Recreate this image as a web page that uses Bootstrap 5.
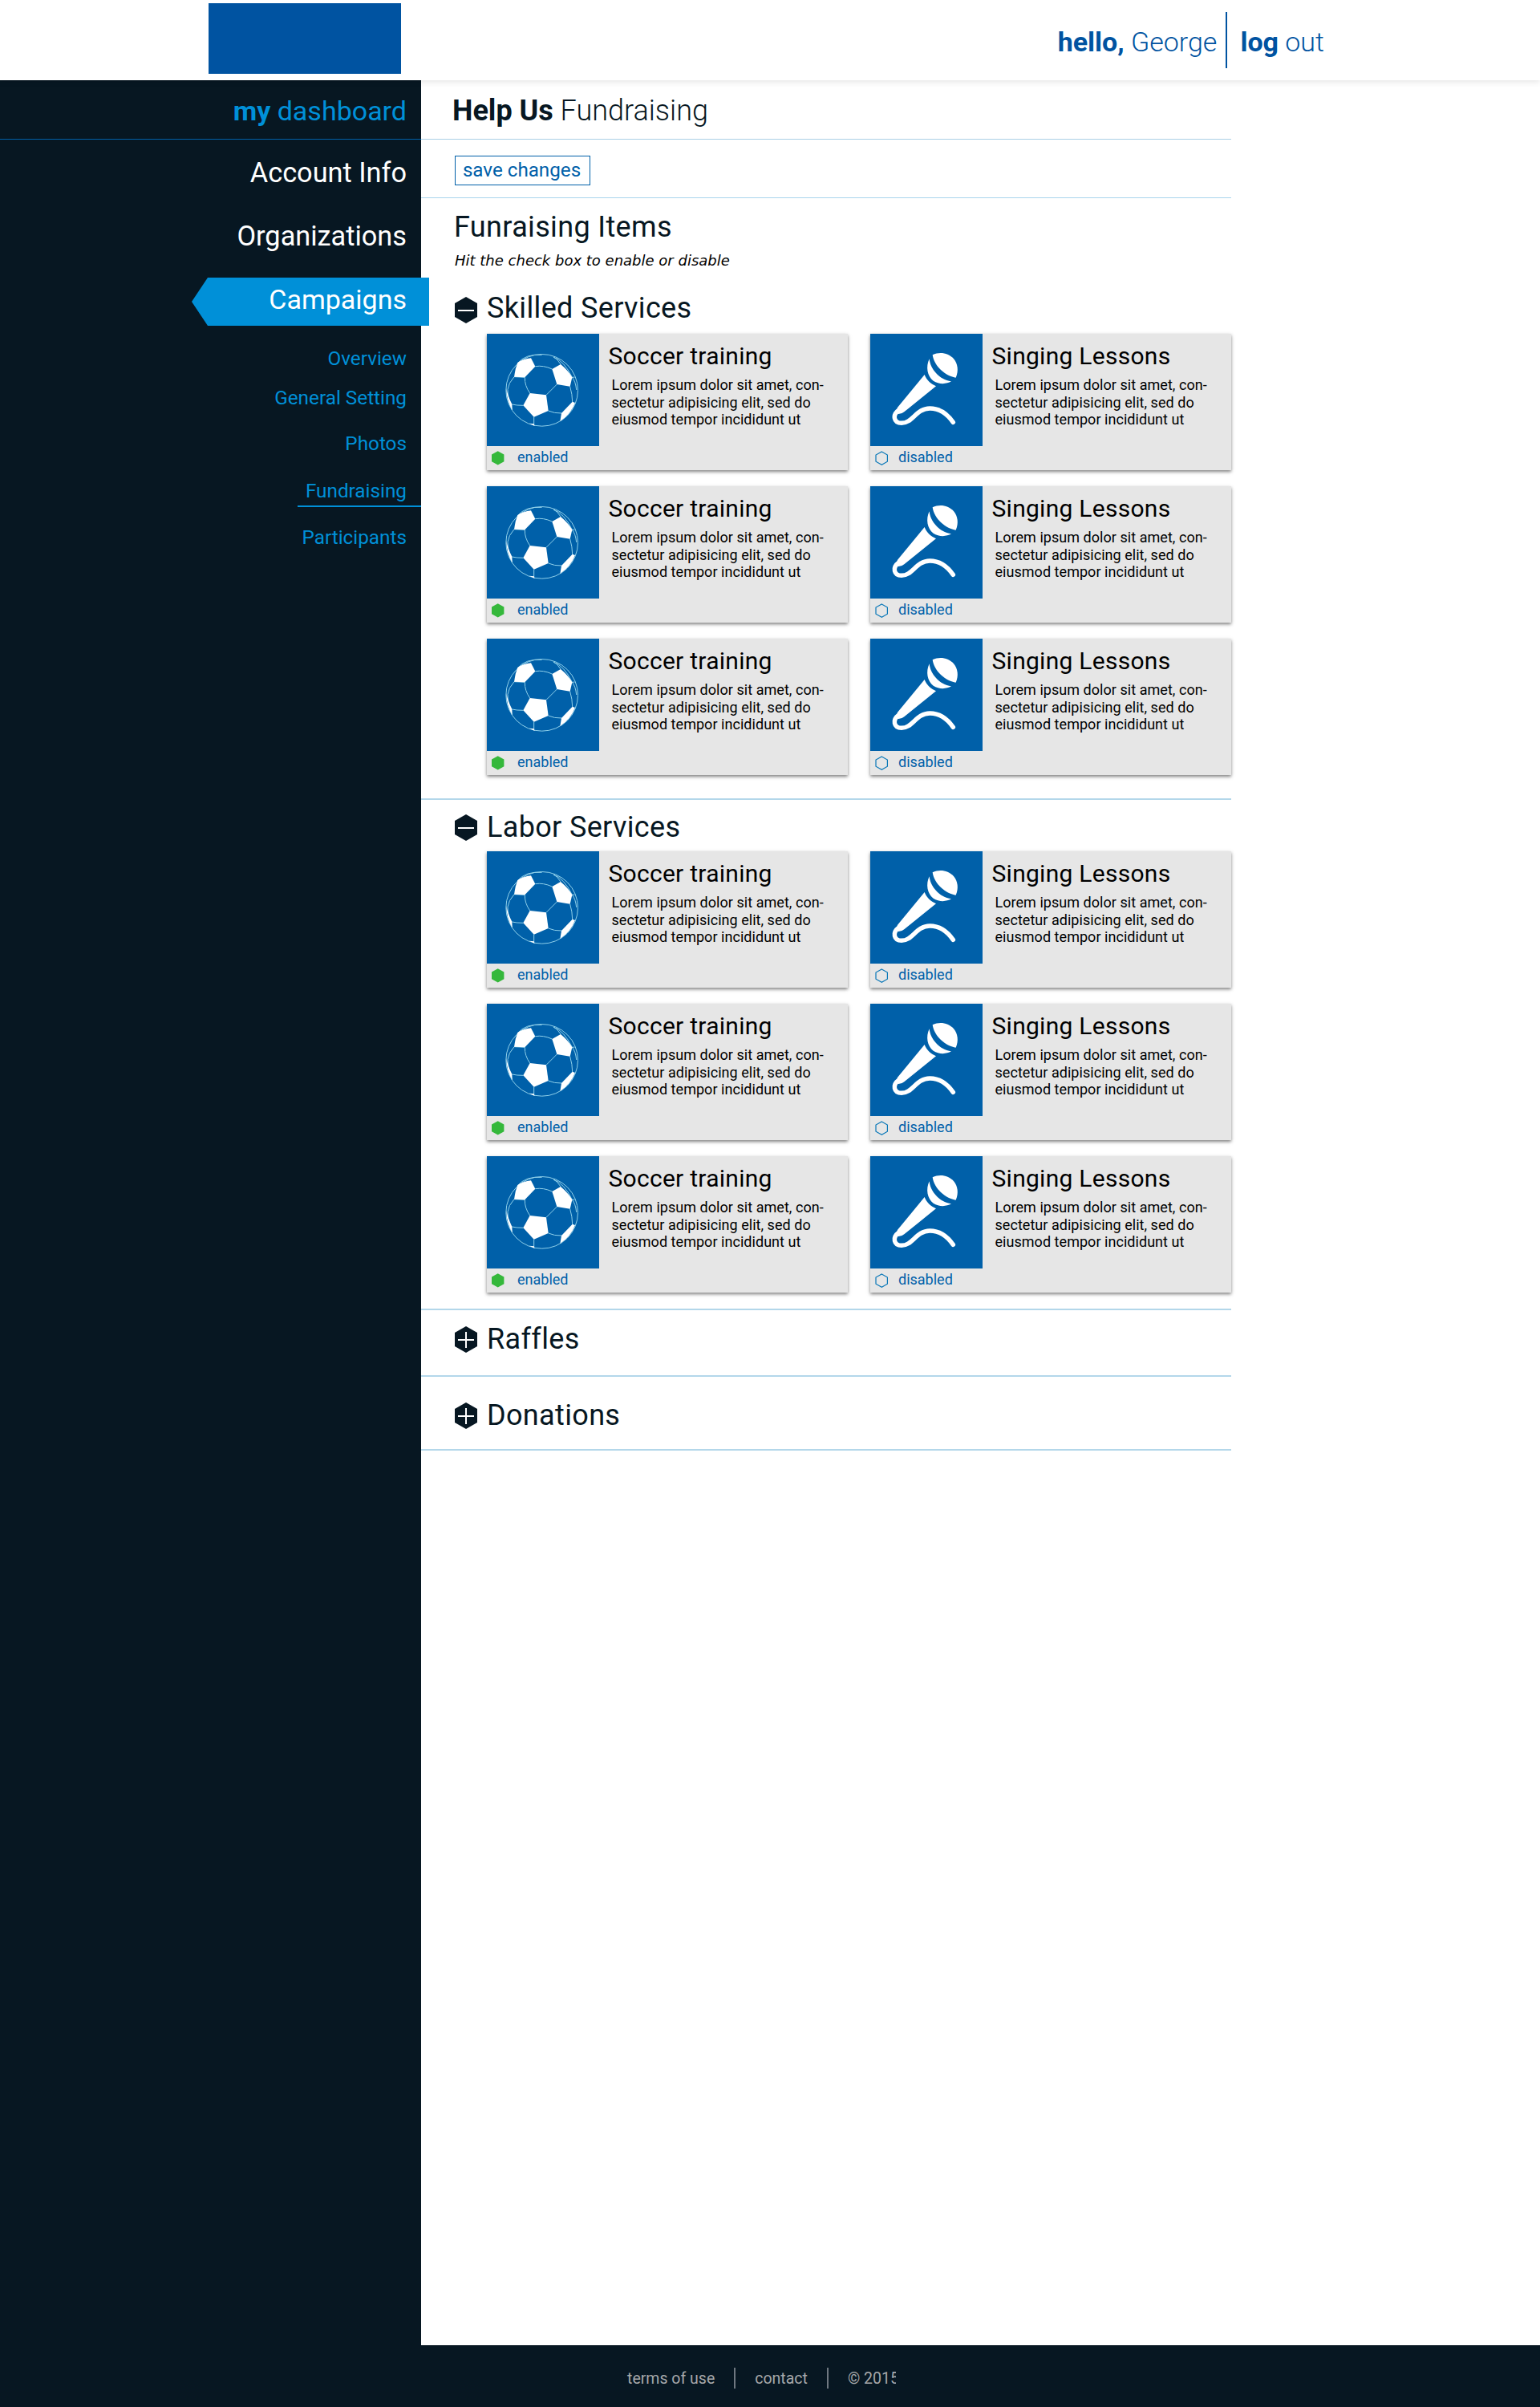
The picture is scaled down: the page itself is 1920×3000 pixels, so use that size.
<!DOCTYPE html>
<html lang="en">
<head>
<meta charset="utf-8">
<title>Help Us Fundraising</title>
<link href="https://cdn.jsdelivr.net/npm/bootstrap@5.3.0/dist/css/bootstrap.min.css" rel="stylesheet">
<style>
body{font-family:Roboto,"Liberation Sans",sans-serif;color:#071722;width:1920px;min-height:3000px;background:#fff}
a{text-decoration:none;color:inherit}
b{font-weight:700}
.topbar{height:100px;padding:0 269px 0 260px;color:#0053a1;font-size:34px;line-height:104px;font-weight:300;position:relative;z-index:1;box-shadow:0 2px 8px rgba(0,0,0,.11)}
.topbar .logo{width:240px;height:88px;background:#0053a1;margin-top:4px}
.topbar .rule{width:2px;height:70px;background:#0053a1;margin:15px 16px 0 11px}
.page{height:2823px}
.side{width:525px;background:#071722;color:#fff;text-align:right}
.side a{display:block;padding-right:18px}
.side .dash{height:74px;padding-top:4px;line-height:69px;font-size:34px;color:#0090d8;border-bottom:1px solid #0060a9;margin-bottom:2px}
.side .main-link{font-size:34.3px;line-height:79px;height:79px}
.side .tab{margin:12px -10px 16px 239px;padding-right:28px;height:60px;line-height:55px;font-size:34px;background:#0090d8;clip-path:polygon(20px 0,100% 0,100% 100%,20px 100%,0 50%)}
.subnav{font-size:24.300px;color:#0090d8}
.subnav a{line-height:58px}
.subnav .tight{line-height:49px}
.subnav .current{margin-left:371px;padding-top:12px;line-height:36px;border-bottom:2px solid #0090d8}
.subnav .last{margin-top:18px;line-height:40px}
.content{width:1010px}
.ttl{height:74px;padding:4px 0 0 39px;line-height:69px;font-size:36px;font-weight:300;border-bottom:1px solid #a9d0e6;margin:0}
.tools{height:73px;padding:20px 0 0 42px;border-bottom:1px solid #a9d5ec}
.save{width:169px;height:37px;border:1px solid #0060a9;border-radius:0;color:#0060a9;font-size:24.200px;line-height:33px;padding:0 2px 0 0}
.intro{height:114px;padding:1px 0 0 41px}
.intro h2{font-size:36px;letter-spacing:.35px;font-weight:400;line-height:70px;margin:0}
.intro p{font:italic 18px/24px "DejaVu Sans",sans-serif;color:#000;margin:-5px 0 0 1px}
.sec{border-bottom:2px solid #b3d7ea}
.sec-head{height:55px;padding-left:42px}
.sec-head h3{font-size:36px;letter-spacing:.35px;font-weight:400;line-height:50px;margin:0 0 0 12px}
.sec-first h3{line-height:47px}
.sec-head svg{width:28px;height:33px;margin-top:9px}
.items{margin-left:82px;width:928px;display:grid;grid-template-columns:450px 450px;column-gap:28px;row-gap:20px}
.item{height:170px;background:#e6e6e6;box-shadow:0 2px 4px rgba(0,0,0,.5);color:#000}
.thumb{width:140px;height:140px;background:#0060a9;display:block}
.status{height:30px;line-height:27px;font-size:18px;color:#0060a9;padding-left:6px}
.status svg{width:16px;height:18px;margin-top:6px}
.status span{margin-left:16px}
.item.off .status span{margin-left:13px}
.item h4{font-size:30px;font-weight:400;line-height:36px;letter-spacing:.27px;margin:10px 0 0 11.5px}
.item p{font-size:18px;line-height:21.5px;letter-spacing:.04px;margin:7px 0 0 15.5px;white-space:nowrap}
.foot{height:77px;background:#071722;color:#a6a8aa;font-size:19.5px;line-height:84px;padding-left:782px}
.foot i{width:2px;height:26px;background:#6e7780;margin:28px 24px 0}
.foot .year{width:60px;overflow:hidden;white-space:nowrap}
</style>
<script src="https://cdn.jsdelivr.net/npm/bootstrap@5.3.0/dist/js/bootstrap.bundle.min.js"></script>
</head>
<body>
<svg width="0" height="0" class="position-absolute">
 <symbol id="ball" viewBox="-39 18 420 420">
  <circle cx="167" cy="229" r="134.500" fill="none" stroke="#8fd0ea" stroke-width="3"/>
  <g fill="none" stroke="#8fd0ea" stroke-width="3">
   <path d="M142 140Q172 135 205 150M103 181Q102 212 122 240M183 247L223 207M63 179Q42 202 39 226M280 181Q293 196 296 228M63 179L103 181M272 215Q281 245 281 273M191 306Q213 316 241 315M97 286Q72 286 55 282M137 329L137 358M210 105Q224 110 237 132M210 105Q250 119 280 181M76 128Q106 92 167 97M280 181L290 180M39 226Q38 260 55 302"/>
  </g>
  <g fill="#fff">
   <path d="M76 126Q97 112 126 109L142 140 103 181 63 179Q66 150 76 126Z"/>
   <path d="M237 132L205 150 223 207 272 215 280 181Q264 154 237 132Z"/>
   <path d="M122 240L183 247 191 306 137 329 97 286Z"/>
   <path d="M281 272L291 276Q274 320 235 345L240 315Z"/>
   <path d="M34 221Q39 250 55 281L56 304Q34 266 34 221Z"/>
   <path d="M120 353L137 355 140 363Z"/>
  </g>
 </symbol>
 <symbol id="mic" viewBox="15 18 420 420">
  <path fill="#fff" d="M248 97C275 83 307 90 326 110C343 130 346 156 335 182C300 178 254 142 248 97Z"/>
  <path fill="#fff" d="M236 112C239 148 273 191 318 196C300 207 272 208 251 194C228 177 222 141 236 112Z"/>
  <path fill="#fff" d="M218 171C225 190 241 205 261 214L142 310Q132 319 118 318L116 295Z"/>
  <path fill="none" stroke="#fff" stroke-width="16.500" stroke-linecap="round" d="M122 303C96 322 103 352 132 352C174 352 186 297 238 297C275 297 304 319 325 349"/>
 </symbol>
 <symbol id="minus" viewBox="0 0 28 33"><path fill="#071722" d="M14 0L28 8V25L14 33 0 25V8Z"/><path fill="#fff" d="M4 16h20v2H4z"/></symbol>
 <symbol id="plus" viewBox="0 0 28 33"><path fill="#071722" d="M14 0L28 8V25L14 33 0 25V8Z"/><path fill="#fff" d="M4 16h20v2H4zM13 7h2v20h-2z"/></symbol>
 <symbol id="on" viewBox="0 0 16 18"><path fill="#35b83b" d="M7.700 .3L15.400 4.500V13.200L7.700 17.400 0 13.200V4.500Z"/></symbol>
 <symbol id="off" viewBox="0 0 16 18"><path fill="none" stroke="#0a78b8" stroke-width="1.200" d="M8.300 1L15.400 5V13.200L8.300 17.200 1 13.200V5Z"/></symbol>
</svg>

<header class="topbar d-flex align-items-start bg-white">
 <a class="logo" href="#"></a>
 <a class="ms-auto" href="#"><b>hello,</b> George</a><span class="rule"></span><a href="#"><b>log</b> out</a>
</header>

<div class="page d-flex">
 <nav class="side flex-shrink-0">
  <a class="dash" href="#"><b>my</b> dashboard</a>
  <a class="main-link" href="#">Account Info</a>
  <a class="main-link" href="#">Organizations</a>
  <a class="tab" href="#">Campaigns</a>
  <div class="subnav">
   <a class="tight" href="#">Overview</a>
   <a class="tight mb-1" href="#">General Setting</a>
   <a href="#">Photos</a>
   <a class="current" href="#">Fundraising</a>
   <a class="last" href="#">Participants</a>
  </div>
 </nav>
 <main class="content">
  <h1 class="ttl"><b>Help Us</b> Fundraising</h1>
  <div class="tools"><button class="btn save d-block">save changes</button></div>
  <div class="intro"><h2>Funraising Items</h2><p>Hit the check box to enable or disable</p></div>

  <section class="sec sec-first" style="height:636px">
   <div class="sec-head d-flex"><svg><use href="#minus"/></svg><h3>Skilled Services</h3></div>
   <div class="items">
    <div class="item d-flex"><div><svg class="thumb"><use href="#ball"/></svg><div class="status d-flex"><svg><use href="#on"/></svg><span>enabled</span></div></div><div><h4>Soccer training</h4><p>Lorem ipsum dolor sit amet, con-<br>sectetur adipisicing elit, sed do<br>eiusmod tempor incididunt ut</p></div></div>
    <div class="item off d-flex"><div><svg class="thumb"><use href="#mic"/></svg><div class="status d-flex"><svg><use href="#off"/></svg><span>disabled</span></div></div><div><h4>Singing Lessons</h4><p>Lorem ipsum dolor sit amet, con-<br>sectetur adipisicing elit, sed do<br>eiusmod tempor incididunt ut</p></div></div>
    <div class="item d-flex"><div><svg class="thumb"><use href="#ball"/></svg><div class="status d-flex"><svg><use href="#on"/></svg><span>enabled</span></div></div><div><h4>Soccer training</h4><p>Lorem ipsum dolor sit amet, con-<br>sectetur adipisicing elit, sed do<br>eiusmod tempor incididunt ut</p></div></div>
    <div class="item off d-flex"><div><svg class="thumb"><use href="#mic"/></svg><div class="status d-flex"><svg><use href="#off"/></svg><span>disabled</span></div></div><div><h4>Singing Lessons</h4><p>Lorem ipsum dolor sit amet, con-<br>sectetur adipisicing elit, sed do<br>eiusmod tempor incididunt ut</p></div></div>
    <div class="item d-flex"><div><svg class="thumb"><use href="#ball"/></svg><div class="status d-flex"><svg><use href="#on"/></svg><span>enabled</span></div></div><div><h4>Soccer training</h4><p>Lorem ipsum dolor sit amet, con-<br>sectetur adipisicing elit, sed do<br>eiusmod tempor incididunt ut</p></div></div>
    <div class="item off d-flex"><div><svg class="thumb"><use href="#mic"/></svg><div class="status d-flex"><svg><use href="#off"/></svg><span>disabled</span></div></div><div><h4>Singing Lessons</h4><p>Lorem ipsum dolor sit amet, con-<br>sectetur adipisicing elit, sed do<br>eiusmod tempor incididunt ut</p></div></div>
   </div>
  </section>

  <section class="sec" style="height:636px;padding-top:9px">
   <div class="sec-head d-flex"><svg><use href="#minus"/></svg><h3>Labor Services</h3></div>
   <div class="items">
    <div class="item d-flex"><div><svg class="thumb"><use href="#ball"/></svg><div class="status d-flex"><svg><use href="#on"/></svg><span>enabled</span></div></div><div><h4>Soccer training</h4><p>Lorem ipsum dolor sit amet, con-<br>sectetur adipisicing elit, sed do<br>eiusmod tempor incididunt ut</p></div></div>
    <div class="item off d-flex"><div><svg class="thumb"><use href="#mic"/></svg><div class="status d-flex"><svg><use href="#off"/></svg><span>disabled</span></div></div><div><h4>Singing Lessons</h4><p>Lorem ipsum dolor sit amet, con-<br>sectetur adipisicing elit, sed do<br>eiusmod tempor incididunt ut</p></div></div>
    <div class="item d-flex"><div><svg class="thumb"><use href="#ball"/></svg><div class="status d-flex"><svg><use href="#on"/></svg><span>enabled</span></div></div><div><h4>Soccer training</h4><p>Lorem ipsum dolor sit amet, con-<br>sectetur adipisicing elit, sed do<br>eiusmod tempor incididunt ut</p></div></div>
    <div class="item off d-flex"><div><svg class="thumb"><use href="#mic"/></svg><div class="status d-flex"><svg><use href="#off"/></svg><span>disabled</span></div></div><div><h4>Singing Lessons</h4><p>Lorem ipsum dolor sit amet, con-<br>sectetur adipisicing elit, sed do<br>eiusmod tempor incididunt ut</p></div></div>
    <div class="item d-flex"><div><svg class="thumb"><use href="#ball"/></svg><div class="status d-flex"><svg><use href="#on"/></svg><span>enabled</span></div></div><div><h4>Soccer training</h4><p>Lorem ipsum dolor sit amet, con-<br>sectetur adipisicing elit, sed do<br>eiusmod tempor incididunt ut</p></div></div>
    <div class="item off d-flex"><div><svg class="thumb"><use href="#mic"/></svg><div class="status d-flex"><svg><use href="#off"/></svg><span>disabled</span></div></div><div><h4>Singing Lessons</h4><p>Lorem ipsum dolor sit amet, con-<br>sectetur adipisicing elit, sed do<br>eiusmod tempor incididunt ut</p></div></div>
   </div>
  </section>

  <section class="sec" style="height:83px;padding-top:11px"><div class="sec-head d-flex"><svg><use href="#plus"/></svg><h3>Raffles</h3></div></section>
  <section class="sec" style="height:92px;padding-top:23px"><div class="sec-head d-flex"><svg><use href="#plus"/></svg><h3>Donations</h3></div></section>
 </main>
</div>

<footer class="foot d-flex">
 <a href="#">terms of use</a><i></i><a href="#">contact</a><i></i><span class="year">© 2015</span>
</footer>
</body>
</html>
